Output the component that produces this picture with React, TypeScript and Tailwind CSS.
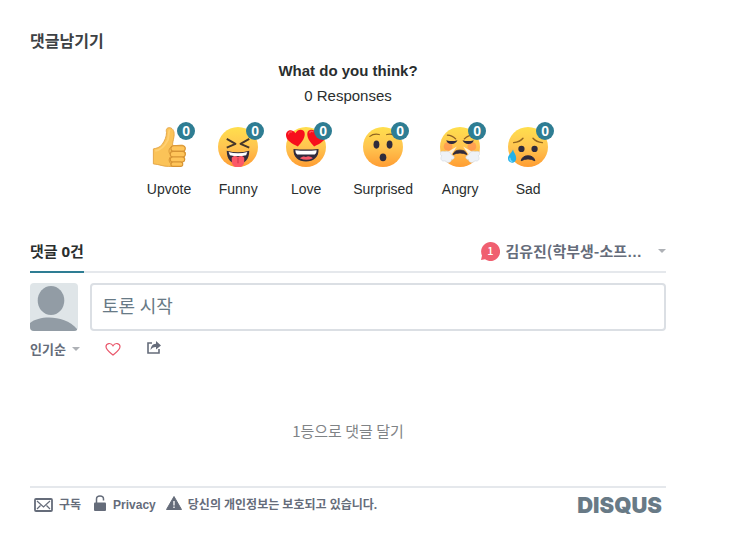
import type { ReactNode } from 'react';

function Face({ id, children }: { id: string; children: ReactNode }) {
  return (
    <svg viewBox="0 0 64 64" className="size-10" aria-hidden="true">
      <defs>
        <linearGradient id={id} x1="0" y1="0" x2="0" y2="1">
          <stop offset="0" stopColor="#ffdf4d" />
          <stop offset="0.5" stopColor="#ffc550" />
          <stop offset="1" stopColor="#ff9d33" />
        </linearGradient>
      </defs>
      <circle cx="32" cy="32" r="32" fill={`url(#${id})`} />
      {children}
    </svg>
  );
}

function Thumb() {
  return (
    <svg viewBox="0 0 64 64" className="size-10" aria-hidden="true">
      <path
        d="M7 35 C12 34 17 33 21 28 C25 22 28 16 28 9 C27 4 28 1 33 1 C39 2 41 8 40 15 C39 22 37 26 38 30 L52 29 C58 29 59 36 55 38 C60 40 59 46 55 47 C59 50 57 55 53 56 C55 60 52 63 47 63 L31 63 C21 63 18 60 7 59 Z"
        fill="#fbc358"
        stroke="#e3a444"
        strokeWidth="1.5"
      />
      <path d="M10 38 C19 37 25 31 30 21 C32 15 31 9 33 4" fill="none" stroke="#ffd072" strokeWidth="3" />
      <g fill="#ffc55a" stroke="#d69334" strokeWidth="1.8">
        <rect x="35" y="30" width="23" height="9" rx="4.5" />
        <rect x="34" y="39" width="24" height="9" rx="4.5" />
        <rect x="34" y="48" width="23" height="8" rx="4" />
        <rect x="35" y="56" width="19" height="7" rx="3.5" />
      </g>
      <path d="M37 31 C31 34 31 40 34 44 M34 48 C31 52 32 57 36 59" fill="none" stroke="#d69334" strokeWidth="1.5" />
    </svg>
  );
}

function Funny() {
  return (
    <Face id="faceFunny">
      <path
        d="M14 19 L28 27 L14 33 M50 19 L36 27 L50 33"
        fill="none"
        stroke="#45362a"
        strokeWidth="3"
        strokeLinejoin="round"
      />
      <path d="M14 38 Q32 43 50 38 C50 52 43 59 32 59 S14 52 14 38Z" fill="#302b3c" />
      <path d="M17 40 Q32 44 47 40 L45 45 Q32 48 19 45Z" fill="#fff" />
      <path d="M22 49 C25 45 29 46 32 48 C35 46 39 45 42 49 V55 C42 68 22 68 22 55Z" fill="#fb5968" />
      <path d="M32 49 V58" stroke="#d93850" strokeWidth="2" />
    </Face>
  );
}

function Love() {
  return (
    <Face id="faceLove">
      <path d="M19 31 C9 26 0 21 0 13 C0 5 10 2 15 10 C19 2 30 3 30 11 C30 19 24 25 19 31Z" fill="#f70f1c" />
      <path d="M45 31 C40 25 34 19 34 11 C34 3 45 2 49 10 C54 2 64 5 64 13 C64 21 55 26 45 31Z" fill="#f70f1c" />
      <path d="M4 12 C4 8 7 7 10 8 M38 10 C38 7 41 6 44 8" fill="none" stroke="#ff5359" strokeWidth="2" />
      <path d="M12 35 Q32 37 52 35 C53 48 44 55 32 55 S11 48 12 35Z" fill="#302b3c" />
      <path d="M15 37 Q32 39 49 37 C49 42 47 44 44 44 H20 C17 44 15 42 15 37Z" fill="#fff" />
      <path d="M22 50 C27 46 30 47 32 48 C35 46 39 47 43 50 Q33 55 22 50Z" fill="#f65768" />
    </Face>
  );
}

function Surprised() {
  return (
    <Face id="faceSurprised">
      <path
        d="M11 15 Q17 10 26 12 M38 12 Q47 10 53 15"
        fill="none"
        stroke="#8f6421"
        strokeWidth="2"
        strokeLinecap="round"
      />
      <ellipse cx="21.5" cy="28" rx="4.7" ry="6.6" fill="#302b3c" />
      <ellipse cx="42.5" cy="28" rx="4.7" ry="6.6" fill="#302b3c" />
      <ellipse cx="32" cy="48.5" rx="5.3" ry="6.2" fill="#302b3c" />
    </Face>
  );
}

function Angry() {
  return (
    <Face id="faceAngry">
      <circle cx="13" cy="31" r="7" fill="#ff7153" opacity=".45" />
      <circle cx="51" cy="31" r="7" fill="#ff7153" opacity=".45" />
      <path
        d="M12 13 Q19 13 25 19 M52 13 Q45 13 39 19"
        fill="none"
        stroke="#8c5d25"
        strokeWidth="2.2"
        strokeLinecap="round"
      />
      <path
        d="M10 21 Q19 24 28 21 Q24 28 18 27 Q12 27 10 21Z M54 21 Q45 24 36 21 Q40 28 46 27 Q52 27 54 21Z"
        fill="#302b3c"
      />
      <path d="M27 31 L12 40 L16 47Z M37 31 L52 40 L48 47Z" fill="#fff" opacity=".8" />
      <path d="M21 44 Q23 37 32 37 T43 44 Q32 39 21 44Z" fill="#302b3c" stroke="#302b3c" strokeWidth="1.5" />
      <g fill="#eef2f7" stroke="#d4dae2" strokeWidth="1">
        <path d="M15 40 C10 37 8 40 6 39 C-1 38 -1 45 3 46 C-1 51 3 56 8 54 C12 59 19 56 18 52 C24 52 24 46 19 45Z" />
        <path d="M49 40 C54 37 56 40 58 39 C65 38 65 45 61 46 C65 51 61 56 56 54 C52 59 45 56 46 52 C40 52 40 46 45 45Z" />
      </g>
    </Face>
  );
}

function Sad() {
  return (
    <Face id="faceSad">
      <path
        d="M9 25 Q19 24 24 18 M40 18 Q45 24 55 25"
        fill="none"
        stroke="#93651f"
        strokeWidth="2.2"
        strokeLinecap="round"
      />
      <circle cx="21.5" cy="35" r="5" fill="#302b3c" />
      <circle cx="42.5" cy="35" r="5" fill="#302b3c" />
      <path d="M21 54 Q23 46 32 46 T43 54 Q32 48 21 54Z" fill="#302b3c" stroke="#302b3c" strokeWidth="1.5" />
      <path d="M8 36 C5 43 0 45 0 50 C0 60 14 59 13 49 C13 44 9 41 8 36Z" fill="#24b1e8" />
      <path d="M3 49 C3 53 5 55 7 55" fill="none" stroke="#79dbff" strokeWidth="2" />
    </Face>
  );
}

const reactions = [
  { label: 'Upvote', icon: <Thumb /> },
  { label: 'Funny', icon: <Funny /> },
  { label: 'Love', icon: <Love /> },
  { label: 'Surprised', icon: <Surprised /> },
  { label: 'Angry', icon: <Angry /> },
  { label: 'Sad', icon: <Sad /> },
];

function Caret() {
  return (
    <svg viewBox="0 0 8 4" className="h-1 w-2" fill="#aeb1b6" aria-hidden="true">
      <path d="M0 0H8L4 4Z" />
    </svg>
  );
}

export default function App() {
  return (
    <main className="bg-white pt-7 pr-[67px] pb-6 pl-[30px] font-['Liberation_Sans','Noto_Sans_CJK_KR',sans-serif] text-[#2a2e2e]">
      <h1 className="font-['Noto_Sans_CJK_KR',sans-serif] text-base leading-6 font-bold text-[#3d4144]">댓글남기기</h1>

      <section className="mt-2 text-center text-[15px] leading-[22px]">
        <h2 className="font-bold">What do you think?</h2>
        <p className="mt-[3px]">0 Responses</p>
        <div className="mt-5 flex justify-center">
          {reactions.map(({ label, icon }) => (
            <button key={label} type="button" className="flex min-w-[68px] flex-col items-center px-[13px]">
              <span className="relative">
                {icon}
                <span className="absolute -top-[5px] -right-1.5 size-[18px] rounded-full bg-[#2e7d93] text-center text-sm leading-[18px] font-bold text-white">
                  0
                </span>
              </span>
              <span className="mt-3 text-sm leading-5">{label}</span>
            </button>
          ))}
        </div>
      </section>

      <header className="mt-9 flex h-[38px] justify-between border-b-2 border-[#e5e8ec] font-['Noto_Sans','Noto_Sans_CJK_KR',sans-serif] text-[15px] leading-8 font-bold">
        <h2 className="-mb-0.5 border-b-2 border-[#2e7d93]">댓글 0건</h2>
        <div className="flex h-8 items-center text-[#656c7a]">
          <button type="button" aria-label="알림 1" className="relative mr-[5px] size-5">
            <svg viewBox="0 0 20 20" className="size-5" fill="#f05f70" aria-hidden="true">
              <path d="M10 1a9.5 9.5 0 1 1-5 17.2L1 19l1-4.5A9.5 9.5 0 0 1 10 1Z" />
            </svg>
            <span className="absolute inset-0 font-['Noto_Sans_CJK_KR',sans-serif] text-[11px] leading-[18px] font-medium text-white">
              1
            </span>
          </button>
          <button type="button" className="flex items-center gap-4">
            <span className="font-['Noto_Sans_CJK_KR',sans-serif] leading-[30px]">
              김유진(학부생-소프<span className="font-['Liberation_Sans',sans-serif]">…</span>
            </span>
            <Caret />
          </button>
        </div>
      </header>

      <form className="mt-2.5 flex gap-3">
        <svg viewBox="0 0 48 48" className="size-12 rounded-sm bg-[#dfe5e8]" fill="#929ca5" aria-hidden="true">
          <ellipse cx="21" cy="17.5" rx="13.3" ry="14.5" />
          <path d="M0 40C10 32 35 32 47 46V48H0Z" />
        </svg>
        <input
          type="text"
          aria-label="토론 시작"
          placeholder="토론 시작"
          className="h-12 min-w-0 flex-1 rounded border-2 border-[#dbdfe4] px-2.5 pb-0.5 font-['Noto_Sans','Noto_Sans_CJK_KR',sans-serif] text-lg placeholder:text-[#687a86]"
        />
      </form>

      <div className="mt-2 flex h-5 items-center text-[#656c7a]">
        <button
          type="button"
          className="flex items-center gap-1.5 font-['Noto_Sans_CJK_KR',sans-serif] text-[13px] leading-5 font-bold"
        >
          인기순
          <Caret />
        </button>
        <button type="button" aria-label="추천" className="ml-[25px]">
          <svg viewBox="0 0 16 14" className="h-3.5 w-4" fill="none" stroke="#e9566a" strokeWidth="1.2" aria-hidden="true">
            <path d="M8 13C5 10.5 1 8 1 4.8C1 1 6 .3 8 3.8C10 .3 15 1 15 4.8C15 8 11 10.5 8 13Z" />
          </svg>
        </button>
        <button type="button" aria-label="공유" className="ml-[26px] pb-1">
          <svg viewBox="0 0 15 13" className="h-[13px] w-[15px]" aria-hidden="true">
            <path d="M5 2H1V12H12V8" fill="none" stroke="#656c7a" strokeWidth="1.6" />
            <path d="M9 0L14 4.5L9 8.5V6C6 6 5 7 3.5 9C4 5 5.5 3 9 2.7Z" fill="#656c7a" />
          </svg>
        </button>
      </div>

      <p className="mt-[60px] text-center font-['Noto_Sans_CJK_KR',sans-serif] text-[15px] leading-6 text-[#7f8386]">
        1등으로 댓글 달기
      </p>

      <footer className="mt-[43px] flex items-center justify-between border-t-2 border-[#e5e8ec] text-xs font-bold text-[#656c7a]">
        <nav className="flex h-[34px] items-center">
          <a href="#subscribe" className="ml-1 flex items-center gap-1.5">
            <svg viewBox="0 0 19 14" className="h-3.5 w-[19px]" fill="none" stroke="#656c7a" aria-hidden="true">
              <rect x="1" y="1" width="17" height="12" rx="1" strokeWidth="1.8" />
              <path d="M3 3L9.5 9L16 3M3 11L6.5 7.5M16 11L12.5 7.5" strokeWidth="1.2" />
            </svg>
            구독
          </a>
          <a href="#privacy" className="ml-[13px] flex items-center gap-[7px]">
            <svg viewBox="0 0 12 16" className="mb-1 h-4 w-3" aria-hidden="true">
              <path d="M2.5 8V4C2.5 0 9.5 0 9.5 4V5.5" fill="none" stroke="#656c7a" strokeWidth="1.5" />
              <rect y="7.5" width="12" height="8.5" rx="1" fill="#656c7a" />
            </svg>
            Privacy
          </a>
          <a href="#data" className="ml-2.5 flex items-center gap-1.5 font-['Noto_Sans','Noto_Sans_CJK_KR',sans-serif]">
            <svg viewBox="0 0 16 14" className="mb-1 h-3.5 w-4" aria-hidden="true">
              <path d="M8 .5L15.5 13.5H.5Z" fill="#656c7a" stroke="#656c7a" strokeLinejoin="round" />
              <path d="M8 5V9.5M8 10.5V12" stroke="#fff" strokeWidth="1.3" />
            </svg>
            당신의 개인정보는 보호되고 있습니다.
          </a>
        </nav>
        <a
          href="#disqus"
          className="mr-1 font-['Inter','Liberation_Sans',sans-serif] text-[22px] leading-8 font-black text-[#687a86]"
        >
          DISQUS
        </a>
      </footer>
    </main>
  );
}
